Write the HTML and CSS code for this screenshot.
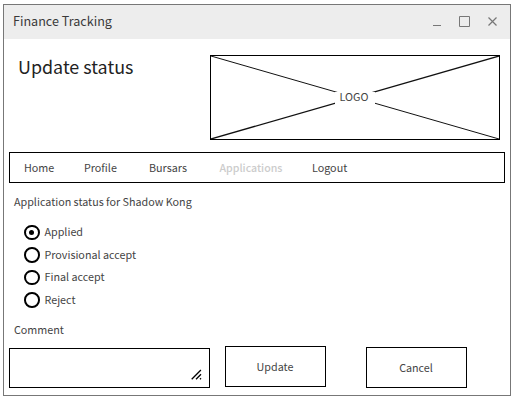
FILE: index.html
```html
<!DOCTYPE html>
<html lang="en">
<head>
<meta charset="utf-8">
<title>Finance Tracking</title>
<link rel="stylesheet" href="styles.css">
</head>
<body>
<main class="window">
  <header class="titlebar">
    <span class="title">Finance Tracking</span>
    <svg class="controls" width="66" height="12" viewBox="0 0 66 12" fill="none" stroke="#777">
      <path d="M1 9.5h8"/>
      <path d="M27.5.5h10v10h-10z"/>
      <path d="M56.500 1.500l8 8M64.500 1.500l-8 8" stroke-width="1.200"/>
    </svg>
  </header>
  <section class="top">
    <h1>Update status</h1>
    <div class="logo">
      <svg class="cross" width="288" height="83" viewBox="0 0 288 83" stroke="#111">
        <path d="M0 0L288 83"/>
        <path d="M0 83L288 0" stroke-width="1.300"/>
      </svg>
      <span class="logo-label">LOGO</span>
    </div>
  </section>
  <nav class="menu">
    <a class="home">Home</a>
    <a class="profile">Profile</a>
    <a class="bursars">Bursars</a>
    <a class="applications">Applications</a>
    <a>Logout</a>
  </nav>
  <p class="caption">Application status for Shadow Kong</p>
  <div class="options">
    <label class="option"><i class="radio checked"></i><span>Applied</span></label>
    <label class="option"><i class="radio"></i><span>Provisional accept</span></label>
    <label class="option"><i class="radio"></i><span>Final accept</span></label>
    <label class="option"><i class="radio"></i><span>Reject</span></label>
  </div>
  <p class="comment">Comment</p>
  <div class="actions">
    <div class="textarea">
      <svg width="11" height="11" viewBox="0 0 11 11" stroke="#000" stroke-width="1.3">
        <path d="M.7 10.200l9.200-9.200M5 10.200l5-5M9 10.200l1-1"/>
      </svg>
    </div>
    <div class="button update">Update</div>
    <div class="button cancel">Cancel</div>
  </div>
</main>
</body>
</html>
```
FILE: styles.css
```css
* { box-sizing: border-box; }
body {
  margin: 0;
  padding: 4px 3px;
  background: #fff;
  color: #444;
  font: 10.75px/18px "Noto Sans CJK SC", "Noto Sans", sans-serif;
}
h1, p { margin: 0; font-weight: inherit; }
.window { width: 508px; height: 392px; border: 1px solid #777; background: #fff; }
.titlebar {
  display: flex;
  justify-content: space-between;
  height: 34px;
  padding: 6px 12px 0 9px;
  background: #ededed;
}
.title { font-size: 12.6px; line-height: 20px; color: #3a3a3a; }
.controls { margin-top: 5px; }
.top { display: flex; justify-content: space-between; height: 113px; padding: 16px 10px 0 14px; }
h1 { margin-top: -1px; font-size: 17.9px; line-height: 24px; color: #222; }
.logo {
  display: grid;
  place-items: center;
  width: 290px;
  height: 85px;
  border: 1px solid #000;
}
.cross, .logo-label { grid-area: 1 / 1; }
.logo-label { z-index: 1; width: 40px; height: 12px; padding-right: 2px; line-height: 9px; text-align: center; background: #fff; }
.menu {
  display: flex;
  align-items: center;
  width: 496px;
  height: 31px;
  margin-left: 5px;
  padding-left: 14px;
  border: 1px solid #000;
}
.home { width: 60px; }
.profile { width: 65px; }
.bursars { width: 70.5px; }
.applications { width: 92.5px; color: #ccc; font-size: 10.6px; font-weight: 500; }
.caption { margin: 10px 0 0 10px; }
.options { padding: 10px 0 0 20px; }
.option { display: flex; align-items: center; gap: 5px; height: 22.5px; }
.radio { display: grid; place-items: center; width: 15.5px; height: 15.5px; border: 2px solid #000; border-radius: 50%; }
.checked::after { content: ""; width: 5px; height: 5px; border-radius: 50%; background: #000; }
.comment { margin: 10px 0 0 10px; }
.actions { display: flex; align-items: flex-start; margin: 7px 0 0 5px; }
.textarea {
  display: flex;
  align-items: flex-end;
  justify-content: flex-end;
  width: 201px;
  height: 40px;
  margin-top: 2px;
  padding: 0 7px 7px 0;
  border: 1px solid #000;
}
.button { display: grid; place-items: center; width: 101px; height: 41px; padding-right: 1px; border: 1px solid #000; }
.update { margin-left: 15px; }
.cancel { margin: 1px 0 0 40px; }
```
